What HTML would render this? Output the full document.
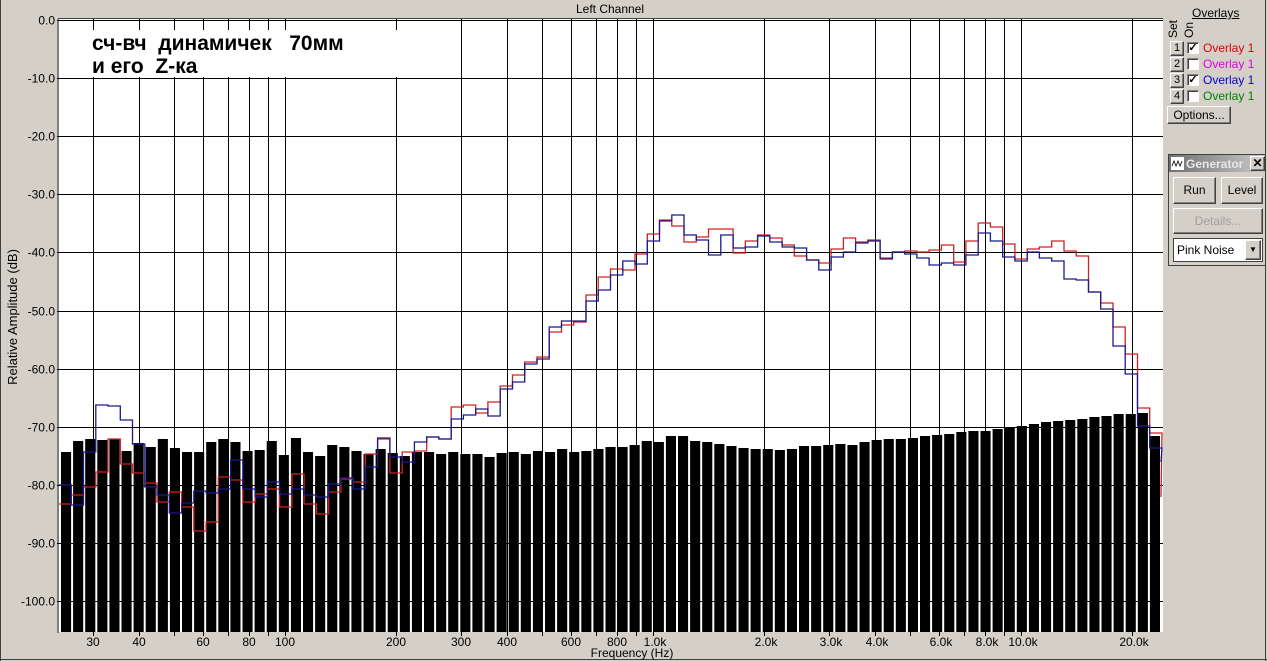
<!DOCTYPE html>
<html><head><meta charset="utf-8">
<style>
html,body{margin:0;padding:0;background:#d4d0c8;width:1267px;height:661px;overflow:hidden;font-family:"Liberation Sans",Arial,sans-serif;}
#wrap{position:absolute;left:0;top:0;width:1267px;height:661px;}
.btn{position:absolute;background:#d4d0c8;border:1px solid;border-color:#fff #404040 #404040 #fff;box-shadow:inset -1px -1px 0 #808080;font-size:12px;text-align:center;box-sizing:border-box;color:#000;}
.cb{position:absolute;width:12px;height:12px;background:#fff;border:1px solid;border-color:#808080 #fff #fff #808080;box-shadow:inset 1px 1px 0 #404040;box-sizing:border-box;font-size:11px;line-height:11px;text-align:center;font-weight:bold;}
.lbl{position:absolute;font-size:12px;}
</style></head><body>
<div id="wrap">
<svg id="g" width="1267" height="661" xmlns="http://www.w3.org/2000/svg" style="position:absolute;left:0;top:0"></svg>

<div style="position:absolute;left:1192px;top:6px;font-size:12px;text-decoration:underline;">Overlays</div>
<div style="position:absolute;left:1166px;font-size:12px;transform:rotate(-90deg);transform-origin:left top;top:38px;">Set</div>
<div style="position:absolute;left:1182px;top:38px;font-size:12px;transform:rotate(-90deg);transform-origin:left top;">On</div>

<div class="btn" style="left:1170px;top:41px;width:14px;height:15px;font-size:11px;line-height:13px">1</div>
<div class="btn" style="left:1170px;top:57px;width:14px;height:15px;font-size:11px;line-height:13px">2</div>
<div class="btn" style="left:1170px;top:73px;width:14px;height:15px;font-size:11px;line-height:13px">3</div>
<div class="btn" style="left:1170px;top:89px;width:14px;height:15px;font-size:11px;line-height:13px">4</div>
<div class="cb" style="left:1187px;top:42px">✓</div>
<div class="cb" style="left:1187px;top:58px"></div>
<div class="cb" style="left:1187px;top:74px">✓</div>
<div class="cb" style="left:1187px;top:90px"></div>
<div class="lbl" style="left:1203px;top:41px;color:#e00000">Overlay 1</div>
<div class="lbl" style="left:1203px;top:57px;color:#e000e0">Overlay 1</div>
<div class="lbl" style="left:1203px;top:73px;color:#0000d0">Overlay 1</div>
<div class="lbl" style="left:1203px;top:89px;color:#008000">Overlay 1</div>
<div class="btn" style="left:1167px;top:106px;width:64px;height:18px;line-height:16px">Options...</div>

<div style="position:absolute;left:1168px;top:154px;width:98px;height:112px;border:1px solid #404040;box-sizing:border-box;background:#d4d0c8;">
  <div style="position:absolute;left:0;top:0;width:96px;height:17px;background:linear-gradient(90deg,#707070,#c8c8c8);"></div>
  <svg style="position:absolute;left:2px;top:2px" width="13" height="13"><rect width="13" height="13" fill="#fff"/><path d="M1,9 L3,4 L5,9 L7,4 L9,9 L11,4" fill="none" stroke="#000" stroke-width="0.8"/></svg>
  <div style="position:absolute;left:17px;top:2px;font-size:12px;font-weight:bold;color:#e8e8e8;">Generator</div>
  <div class="btn" style="left:81px;top:1px;width:15px;height:15px;font-size:12px;line-height:13px;font-weight:bold">✕</div>
  <div class="btn" style="left:4px;top:22px;width:43px;height:27px;line-height:25px">Run</div>
  <div class="btn" style="left:52px;top:22px;width:42px;height:27px;line-height:25px">Level</div>
  <div class="btn" style="left:4px;top:53px;width:90px;height:26px;line-height:24px;color:#a0a0a0">Details...</div>
  <div style="position:absolute;left:4px;top:83px;width:90px;height:24px;background:#fff;border:1px solid #404040;box-sizing:border-box;font-size:12px;line-height:22px;padding-left:3px;">Pink Noise</div>
  <div class="btn" style="left:76px;top:85px;width:16px;height:20px;font-size:8px;line-height:18px">▼</div>
</div>
</div>
<script>
var g=document.getElementById('g'),s='';
function X(f){return 285+368*Math.log10(f/100);}
function Y(db){return 20-5.81*db;}
s+='<line x1="0.5" y1="0" x2="0.5" y2="661" stroke="#404040"/>';
s+='<line x1="0" y1="659.5" x2="1267" y2="659.5" stroke="#404040"/>';
s+='<line x1="1265.5" y1="0" x2="1265.5" y2="661" stroke="#404040"/>';
s+='<rect x="59" y="19" width="1104" height="613" fill="#fff"/>';
s+='<line x1="58" y1="19" x2="58" y2="633" stroke="#808080" stroke-width="2"/>';
s+='<line x1="58" y1="18.5" x2="1163" y2="18.5" stroke="#404040"/>';
s+='<text x="610" y="13" font-size="12" text-anchor="middle" font-family="Liberation Sans, Arial">Left Channel</text>';
var fr=[30,40,50,60,70,80,90,100,200,300,400,500,600,700,800,900,1000,2000,3000,4000,5000,6000,7000,8000,9000,10000,20000];
fr.forEach(function(f){var x=Math.round(X(f))+0.5;s+='<line x1="'+x+'" y1="19" x2="'+x+'" y2="636" stroke="#000"/>';});
for(var k=0;k<=10;k++){var y=Math.round(Y(-10*k))+0.5;s+='<line x1="57" y1="'+y+'" x2="1163" y2="'+y+'" stroke="#000"/>';
 s+='<text x="55" y="'+(y+4)+'" font-size="12" text-anchor="end" font-family="Liberation Sans, Arial">'+(k==0?'0.0':'-'+(10*k)+'.0')+'</text>';}
s+='<rect x="92" y="30" width="306" height="47" fill="#fff"/>';
s+='<text x="92" y="50" font-size="21" font-weight="bold" font-family="Liberation Sans, Arial, sans-serif" xml:space="preserve">сч-вч  динамичек   70мм</text>';
s+='<text x="92" y="73" font-size="21" font-weight="bold" font-family="Liberation Sans, Arial, sans-serif" xml:space="preserve">и его  Z-ка</text>';
var bars=[452,441,439,440,439,451,443,447,439,448,452,452,442,439,442,451,450,441,455,438,452,456,445,447,451,454,449,453,456,452,452,454,
452,454,454,457,453,452,454,451,452,449,452,451,449,447,447,445,441,442,436,436,441,442,444,446,448,449,449,450,449,446,446,
445,444,445,442,440,439,439,438,436,435,434,432,431,431,429,428,426,424,422,421,420,419,417,416,414,414,413,436];
var p=(1162-61)/bars.length;
bars.forEach(function(t,i){var x=61+i*p;s+='<rect x="'+x.toFixed(1)+'" y="'+t+'" width="'+(p-2).toFixed(1)+'" height="'+(632-t)+'" fill="#000"/>';});
var red=[504,495,487,472,439,464,473,483,502,492,507,531,522,477,480,502,494,489,507,474,504,514,492,479,482,454,439,473,452,451,437,439,
407,405,413,402,386,375,362,357,332,325,322,295,277,269,270,254,234,220,226,242,237,229,229,253,241,235,238,245,256,260,263,
249,238,242,240,258,252,251,252,250,245,262,241,223,227,244,259,249,247,241,251,256,292,303,327,354,408,433];
var blue=[485,505,452,405,406,420,444,487,495,513,503,491,493,489,460,489,497,482,494,489,495,497,484,478,489,467,438,457,462,442,437,439,
419,415,409,416,389,382,364,359,327,321,321,301,290,275,261,264,241,221,215,235,240,255,235,248,247,236,242,247,248,260,270,
257,252,243,241,259,252,254,258,265,263,265,255,233,241,257,261,252,258,261,279,280,292,309,346,374,426,448];
function path(a,endY){var q=(1162-59)/a.length,d='M59,'+a[0];
 a.forEach(function(v,i){var x0=(59+i*q).toFixed(1),x1=(59+(i+1)*q).toFixed(1);d+=' L'+x0+','+v+' L'+x1+','+v;});
 d+=' L1161,'+endY;return d;}
s+='<path d="'+path(red,497)+'" fill="none" stroke="#d02020" stroke-width="1.3"/>';
s+='<path d="'+path(blue,462)+'" fill="none" stroke="#1a1a90" stroke-width="1.3"/>';
var xl=[[30,'30'],[40,'40'],[60,'60'],[80,'80'],[100,'100'],[200,'200'],[300,'300'],[400,'400'],[600,'600'],[800,'800'],[1000,'1.0k'],[2000,'2.0k'],[3000,'3.0k'],[4000,'4.0k'],[6000,'6.0k'],[8000,'8.0k'],[10000,'10.0k'],[20000,'20.0k']];
xl.forEach(function(a){s+='<text x="'+(X(a[0])+(a[0]>=1000?2:0)).toFixed(0)+'" y="646" font-size="12" text-anchor="middle" font-family="Liberation Sans, Arial">'+a[1]+'</text>';});
s+='<text x="632" y="657" font-size="12" text-anchor="middle" font-family="Liberation Sans, Arial">Frequency (Hz)</text>';
s+='<text transform="translate(17,317) rotate(-90)" font-size="13" text-anchor="middle" font-family="Liberation Sans, Arial">Relative Amplitude (dB)</text>';
g.innerHTML=s;
</script>
</body></html>
